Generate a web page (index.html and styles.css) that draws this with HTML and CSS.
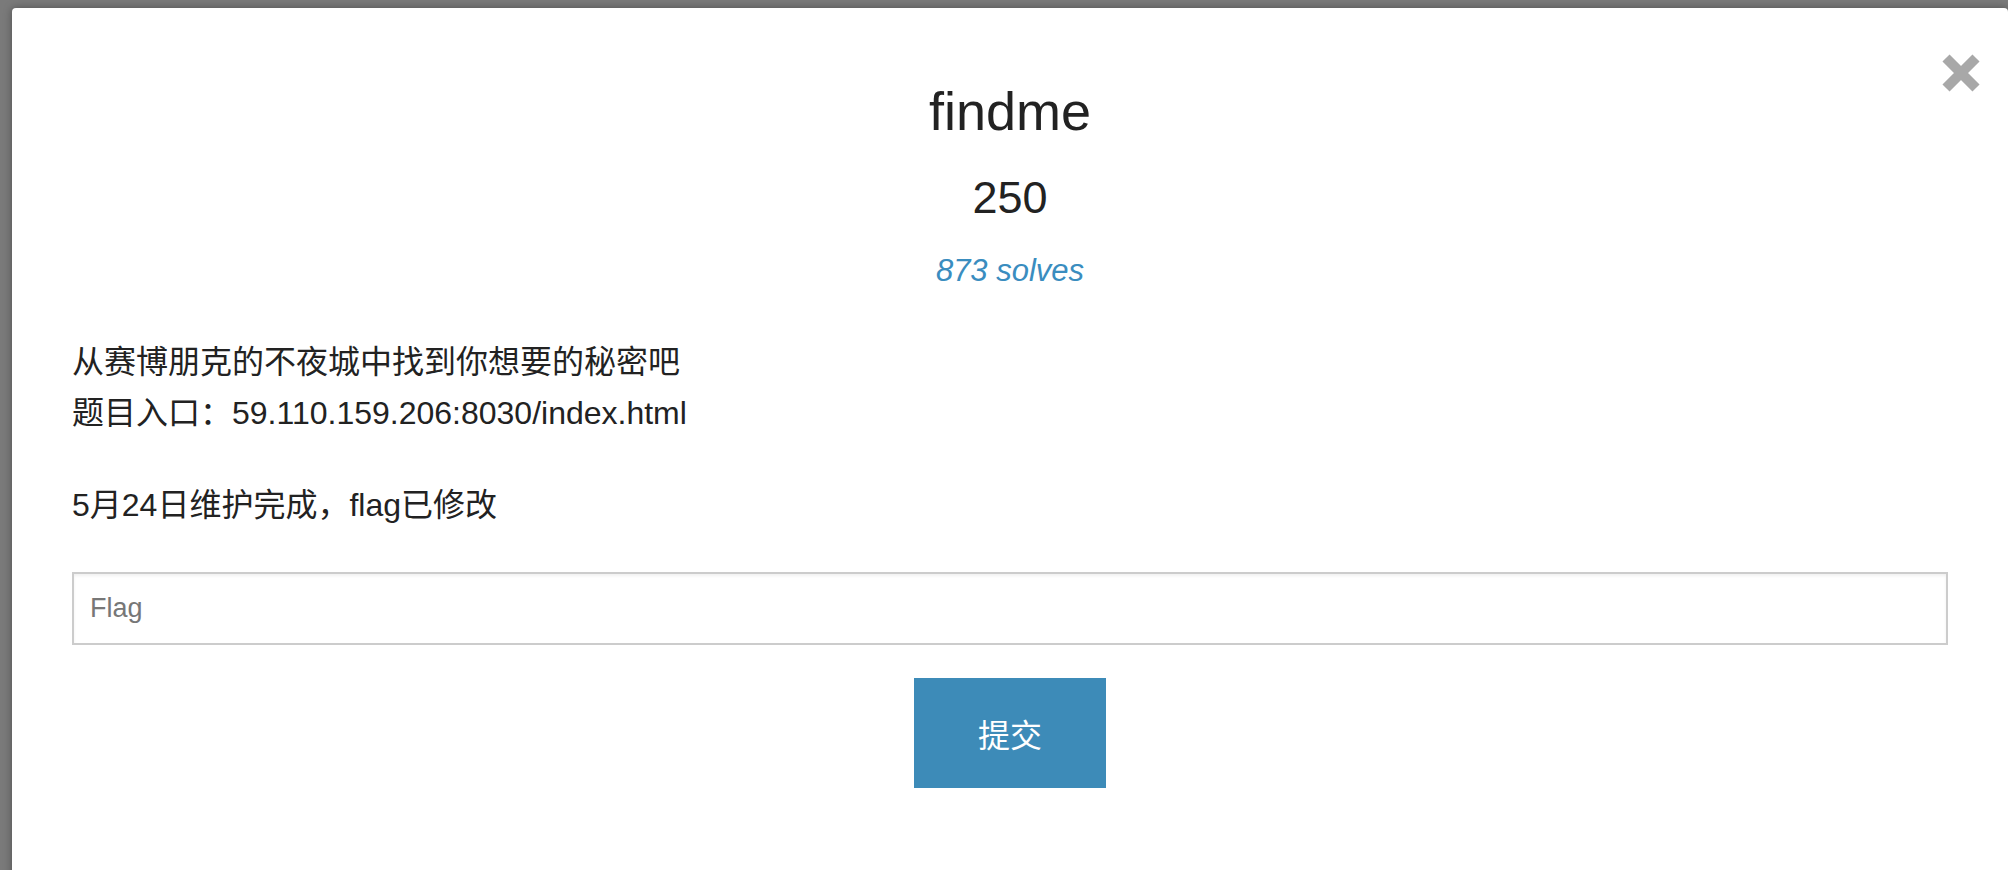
FILE: index.html
```html
<!DOCTYPE html>
<html lang="zh">
<head>
<meta charset="utf-8">
<title>findme</title>
<link rel="stylesheet" href="styles.css">
</head>
<body>
<div class="modal">
  <button class="close" type="button" aria-label="Close">
    <svg width="40" height="40" viewBox="0 0 40 40"><path d="M5 5 L35 35 M35 5 L5 35" stroke="#a8a8a8" stroke-width="10" fill="none"/></svg>
  </button>
  <div class="modal-body">
    <h3 class="chal-name">findme</h3>
    <h4 class="chal-value">250</h4>
    <div class="chal-solves">873 solves</div>
    <p class="desc">从赛博朋克的不夜城中找到你想要的秘密吧<br>题目入口：59.110.159.206:8030/index.html</p>
    <p class="desc desc-note">5月24日维护完成，flag已修改</p>
    <input class="flag-input" type="text" placeholder="Flag">
    <div class="submit-row">
      <button class="submit" type="button">提交</button>
    </div>
  </div>
</div>
</body>
</html>
```
FILE: styles.css
```css
html, body {
  margin: 0;
  padding: 0;
  height: 100%;
  overflow: hidden;
}
body {
  background: #7a7a7a;
  font-family: "Liberation Sans", "Noto Sans CJK SC", sans-serif;
  color: #222;
}
.modal {
  position: relative;
  margin: 8px 0 0 12px;
  height: 880px;
  background: #fff;
  border-radius: 4px 4px 0 0;
  box-shadow: 0 0 9px rgba(0, 0, 0, 0.35);
}
.close {
  position: absolute;
  top: 45px;
  right: 27px;
  width: 40px;
  height: 40px;
  padding: 0;
  border: 0;
  background: none;
}
.close svg { display: block; }
.modal-body {
  padding: 73px 60px 0 60px;
}
.chal-name {
  margin: 0;
  font-size: 54px;
  line-height: 60px;
  font-weight: 400;
  text-align: center;
  color: #222;
}
.chal-value {
  margin: 31px 0 0;
  font-size: 45px;
  line-height: 52px;
  font-weight: 400;
  text-align: center;
  color: #222;
}
.chal-solves {
  margin-top: 29px;
  font-size: 31px;
  line-height: 36px;
  font-style: italic;
  text-align: center;
  color: #3a8dbf;
}
.desc {
  margin: 48px 0 0;
  font-size: 32px;
  line-height: 51px;
  color: #222;
}
.desc-note {
  margin-top: 41px;
}
.flag-input {
  display: block;
  box-sizing: border-box;
  width: 100%;
  height: 73px;
  margin-top: 41px;
  padding: 0 16px;
  border: 2px solid #cccccc;
  border-radius: 0;
  box-shadow: inset 0 2px 3px rgba(0, 0, 0, 0.06);
  font-family: "Liberation Sans", "Noto Sans CJK SC", sans-serif;
  font-size: 27px;
  color: #333;
  outline: none;
}
.flag-input::placeholder {
  color: #777;
}
.submit-row {
  display: flex;
  justify-content: center;
  margin-top: 33px;
}
.submit {
  width: 192px;
  height: 110px;
  border: 0;
  border-radius: 0;
  background: #3d8bb8;
  color: #fff;
  font-family: "Liberation Sans", "Noto Sans CJK SC", sans-serif;
  font-size: 32px;
  padding: 0;
}
```
